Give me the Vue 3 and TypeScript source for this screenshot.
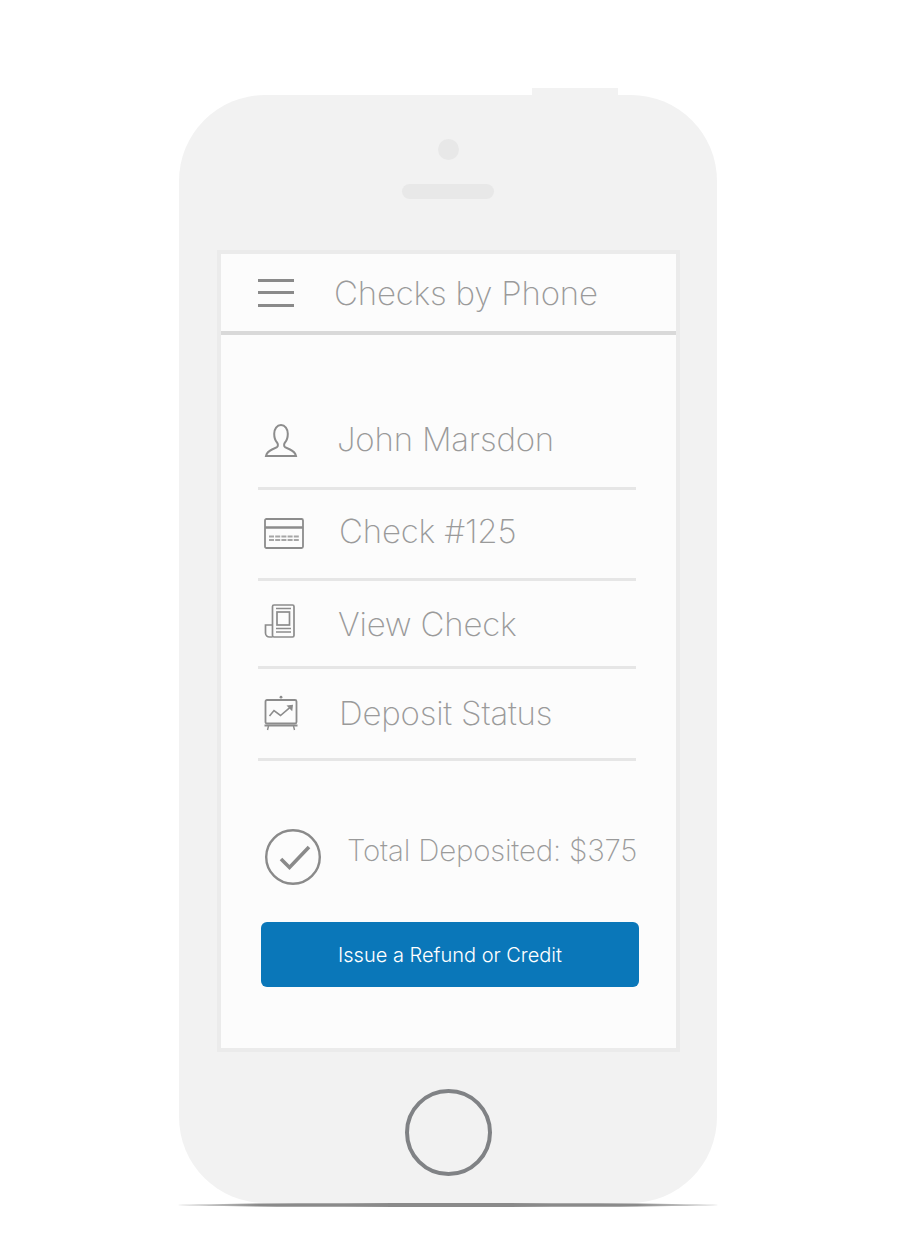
<script setup lang="ts">
interface Row {
  id: string
  label: string
  height: number
  iconWidth: number
  iconLift: number
  labelDrop: number
}

const rows: Row[] = [
  { id: 'person', label: 'John Marsdon', height: 95, iconWidth: 79, iconLift: 2, labelDrop: -4 },
  { id: 'card', label: 'Check #125', height: 91, iconWidth: 81, iconLift: 2, labelDrop: -6 },
  { id: 'doc', label: 'View Check', height: 88, iconWidth: 80, iconLift: 6, labelDrop: 0 },
  { id: 'chart', label: 'Deposit Status', height: 92, iconWidth: 81, iconLift: 2, labelDrop: -2 }
]
</script>

<template>
  <div class="page">
    <div class="phone">
      <div class="side-button"></div>
      <div class="camera"></div>
      <div class="speaker"></div>

      <div class="screen">
        <header class="topbar">
          <div class="burger"><span></span><span></span><span></span></div>
          <h1 class="title">Checks by Phone</h1>
        </header>

        <ul class="rows">
          <li
            v-for="row in rows"
            :key="row.id"
            class="row"
            :style="{ height: `${row.height}px` }"
          >
            <span class="row-icon" :style="{ width: `${row.iconWidth}px`, marginBottom: `${row.iconLift}px` }">
              <svg v-if="row.id === 'person'" width="34" height="35" viewBox="0 0 34 35" fill="none" stroke="#8c8c8c" stroke-width="2">
                <path d="M2 33h30c-.8-3.6-2.8-5-6-6.500l-5-2.400c-1.200-1-1.200-3.200 0-4.600 2-2.200 2.800-5 2.800-8.800C23.800 6 21 2 17 2s-6.800 4-6.800 8.700c0 3.800.8 6.600 2.800 8.800 1.200 1.400 1.200 3.600 0 4.600l-5 2.400C4.800 28 2.800 29.400 2 33z" />
              </svg>
              <svg v-else-if="row.id === 'card'" width="40" height="31" viewBox="0 0 40 31" fill="none" stroke="#8c8c8c">
                <rect x="1" y="1" width="38" height="29" rx="1.500" stroke-width="1.800" />
                <path d="M1 9.500h38" stroke-width="2.600" />
                <path d="M5 18.500h30M5 22h30" stroke="#a6a6a6" stroke-width="2" stroke-dasharray="5 1.200" />
              </svg>
              <svg v-else-if="row.id === 'doc'" width="32" height="34" viewBox="0 0 32 34" fill="none" stroke="#8c8c8c" stroke-width="1.700">
                <rect x="8.500" y="1" width="21.500" height="32" rx="1.500" />
                <path d="M8.500 21H1.500v8a4 4 0 0 0 4 4h3" />
                <rect x="13" y="8" width="12.500" height="13" />
                <path d="M12 4.500h15M12 24.500h15M12 28h15" stroke-width="1.300" />
              </svg>
              <svg v-else width="34" height="36" viewBox="0 0 34 36" fill="none" stroke="#8c8c8c" stroke-width="1.800">
                <circle cx="17" cy="2.200" r="1.400" fill="#8c8c8c" stroke="none" />
                <rect x="1.500" y="5" width="31" height="23.500" rx="1.500" />
                <path d="M.5 30.500h33" stroke-width="2" />
                <path d="M4.500 31l-1 4M29.500 31l1 4" stroke-width="1.400" />
                <path d="M5.500 21l4.500-5.500 6.500 5 9-7.700" stroke-width="1.600" />
                <path d="M22.500 10.500l6.500-.8-.8 6.500z" fill="#8c8c8c" stroke="none" />
              </svg>
            </span>
            <span class="row-label" :style="{ marginTop: `${row.labelDrop}px` }">{{ row.label }}</span>
          </li>
        </ul>

        <div class="total">
          <svg class="total-check" width="58" height="58" viewBox="0 0 58 58" fill="none" stroke="#8a8a8a">
            <circle cx="29" cy="29" r="26.800" stroke-width="2.400" />
            <path d="M17 31l8.500 8.500L45 19" stroke-width="3.600" />
          </svg>
          <span class="total-text">Total Deposited: $375</span>
        </div>

        <button class="refund" type="button">Issue a Refund or Credit</button>
      </div>

      <div class="home"></div>
    </div>
    <div class="ground"></div>
  </div>
</template>

<style>
html,
body {
  margin: 0;
  background: #fff;
}
</style>

<style scoped>
.page {
  width: 900px;
  height: 1244px;
  padding: 95px 0 0 179px;
  box-sizing: border-box;
  font-family: Inter, Lato, "Liberation Sans", sans-serif;
  font-weight: 300;
  overflow: hidden;
}

.phone {
  position: relative;
  width: 538px;
  height: 1108px;
  background: #f2f2f2;
  border-radius: 86px;
  display: flex;
  flex-direction: column;
  align-items: center;
}

.side-button {
  position: absolute;
  top: -7px;
  left: 353px;
  width: 86px;
  height: 7px;
  background: #f2f2f2;
}

.camera {
  width: 21px;
  height: 21px;
  margin-top: 44px;
  border-radius: 50%;
  background: #e8e8e8;
}

.speaker {
  width: 92px;
  height: 15px;
  margin-top: 24px;
  border-radius: 8px;
  background: #e8e8e8;
}

.screen {
  width: 463px;
  height: 802px;
  margin: 51px 0 0 1px;
  box-sizing: border-box;
  border: 4px solid #ebebeb;
  background: #fcfcfc;
}

.topbar {
  height: 81px;
  box-sizing: border-box;
  border-bottom: 4px solid #d9d9d9;
  display: flex;
  align-items: center;
  padding-left: 37px;
}

.burger {
  width: 36px;
  display: flex;
  flex-direction: column;
  gap: 9.500px;
}

.burger span {
  height: 3px;
  background: #8a8a8a;
}

.title {
  margin: 1px 0 0 40px;
  font-size: 33px;
  font-weight: 200;
  letter-spacing: -0.2px;
  color: #9a9a9a;
  white-space: nowrap;
}

.rows {
  list-style: none;
  margin: 0 0 0 37px;
  padding: 60px 0 0;
  width: 378px;
}

.row {
  box-sizing: border-box;
  border-bottom: 3px solid #e6e6e6;
  display: flex;
  align-items: center;
}

.row-icon {
  padding-left: 6px;
  box-sizing: border-box;
  display: flex;
  flex: none;
}

.row-label {
  font-size: 33px;
  font-weight: 200;
  letter-spacing: -0.2px;
  color: #9a9a9a;
  white-space: nowrap;
}

.total {
  display: flex;
  align-items: flex-start;
  margin: 67px 0 0 43px;
}

.total-text {
  margin: 4px 0 0 25px;
  font-size: 29.500px;
  font-weight: 200;
  letter-spacing: -0.2px;
  color: #9a9a9a;
  white-space: nowrap;
}

.refund {
  display: block;
  width: 378px;
  height: 65px;
  margin: 36px 0 0 40px;
  border: 0;
  border-radius: 6px;
  background: #0a77b9;
  color: #fff;
  font-family: inherit;
  font-weight: 300;
  font-size: 20px;
}

.home {
  width: 87px;
  height: 87px;
  margin-top: 37px;
  box-sizing: border-box;
  border: 4px solid #808285;
  border-radius: 50%;
}

.ground {
  width: 540px;
  height: 4px;
  margin-left: -1px;
  border-radius: 50%;
  background: linear-gradient(to right, rgba(130, 130, 130, 0.2), #8a8a8a 15%, #8a8a8a 85%, rgba(130, 130, 130, 0.2));
}
</style>
